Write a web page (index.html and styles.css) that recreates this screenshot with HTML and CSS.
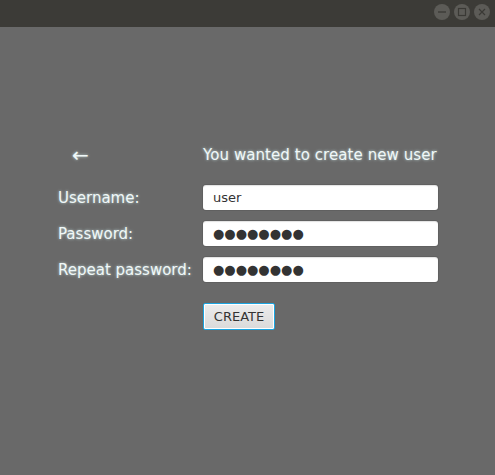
FILE: index.html
```html
<!DOCTYPE html>
<html>
<head>
<meta charset="utf-8">
<link rel="stylesheet" href="styles.css">
</head>
<body>
<div class="titlebar">
  <div class="wbtns">
    <span class="wbtn"><svg width="16" height="16" viewBox="0 0 16 16"><line x1="4" y1="8" x2="12" y2="8" stroke="#3a3935" stroke-width="1.3"/></svg></span>
    <span class="wbtn"><svg width="16" height="16" viewBox="0 0 16 16"><rect x="4.5" y="4.5" width="7" height="7" fill="none" stroke="#3a3935" stroke-width="1.2"/></svg></span>
    <span class="wbtn"><svg width="16" height="16" viewBox="0 0 16 16"><path d="M5 5L11 11M11 5L5 11" stroke="#3a3935" stroke-width="1.2"/></svg></span>
  </div>
</div>
<main class="content">
  <div class="form">
    <div class="back glow">←</div>
    <div class="heading glow">You wanted to create new user</div>
    <label class="lbl glow">Username:</label>
    <div class="field">user</div>
    <label class="lbl glow">Password:</label>
    <div class="field dots">●●●●●●●●</div>
    <label class="lbl glow">Repeat password:</label>
    <div class="field dots">●●●●●●●●</div>
    <div></div>
    <div class="actions"><button class="create">CREATE</button></div>
  </div>
</main>
</body>
</html>
```
FILE: styles.css
```css
html, body {
  margin: 0;
  padding: 0;
  width: 495px;
  height: 475px;
  overflow: hidden;
  background: #696969;
  font-family: "DejaVu Sans", sans-serif;
}
.titlebar {
  height: 27px;
  background: #3c3b37;
  display: flex;
  justify-content: flex-end;
  align-items: flex-start;
}
.wbtns {
  display: flex;
  gap: 4px;
  margin-top: 4px;
  margin-right: 5px;
}
.wbtn {
  width: 16px;
  height: 16px;
  border-radius: 50%;
  background: #5c5b57;
  display: block;
}
.wbtn svg { display: block; }
.content {
  padding: 110px 0 0 58px;
}
.form {
  display: grid;
  grid-template-columns: 145px 235px;
  grid-template-rows: 37px 25px 25px 25px 37px;
  row-gap: 11px;
}
.glow {
  color: #f0f8f8;
  text-shadow: 0 0 3px rgba(215, 245, 245, 0.8);
}
.back {
  font-size: 20px;
  line-height: 37px;
  padding-left: 14px;
}
.heading {
  font-size: 15px;
  line-height: 37px;
  letter-spacing: 0.07px;
  white-space: nowrap;
}
.lbl {
  font-size: 15px;
  line-height: 26px;
}
.field {
  background: #fff;
  border-radius: 3px;
  box-shadow: inset 0 1px 1px rgba(0,0,0,0.12), 0 0 0 1px rgba(0,0,0,0.08);
  font-size: 13px;
  line-height: 25px;
  color: #333;
  padding-left: 10px;
}
.dots {
  font-size: 13px;
  color: #333;
}
.actions {
  padding-top: 10px;
}
.create {
  height: 27px;
  width: 72px;
  padding: 0;
  font-family: "DejaVu Sans", sans-serif;
  font-size: 13px;
  color: #333;
  background: linear-gradient(#ececec, #dadada);
  border: 1px solid #1aa4e0;
  border-radius: 2px;
  box-shadow: inset 0 0 0 1px #fff;
}
```
